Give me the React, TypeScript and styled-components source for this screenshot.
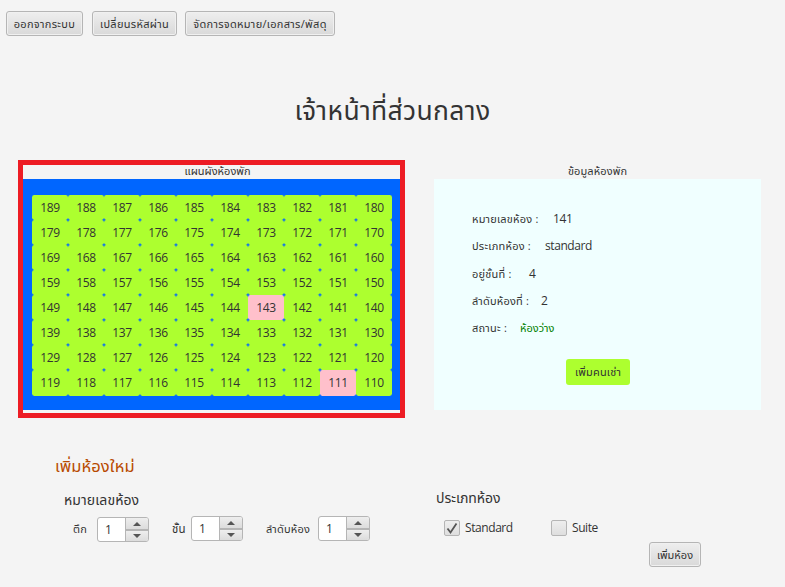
import React from "react";
import styled, { createGlobalStyle } from "styled-components";

const GlobalStyle = createGlobalStyle`
  * { box-sizing: border-box; }
  body { margin: 0; background: #f4f4f4; }
`;

const Page = styled.main`
  width: 785px;
  height: 587px;
  overflow: hidden;
  background: #f4f4f4;
  color: #333;
  font-family: "Open Sans", "Noto Sans Thai", "Liberation Sans", sans-serif;
  font-size: 12px;
  line-height: 16px;
  display: flex;
  flex-direction: column;
`;

const Text = styled.span<{ $size?: number; $track?: number; $color?: string }>`
  display: block;
  white-space: nowrap;
  font-size: ${(p) => p.$size ?? 11}px;
  letter-spacing: ${(p) => p.$track ?? 0.2}px;
  color: ${(p) => p.$color ?? "#333"};
`;

const Latin = styled.span`
  display: block;
  white-space: nowrap;
  font-size: 12px;
  letter-spacing: -0.42px;
`;

const Toolbar = styled.header`
  display: flex;
  height: 36px;
  padding: 11px 0 0 6px;
`;

const Button = styled.button<{ $w: number; $gap?: number }>`
  width: ${(p) => p.$w}px;
  height: 25px;
  margin: 0 ${(p) => p.$gap ?? 0}px 0 0;
  padding: 0;
  flex: none;
  display: flex;
  align-items: center;
  justify-content: center;
  border: 1px solid #b5b5b5;
  border-radius: 3px;
  background: linear-gradient(#eeeeee, #d9d9d9);
  box-shadow: inset 0 0 0 1px #f0f0f0;
  font-family: inherit;
  line-height: 16px;
`;

const RentButton = styled(Button)`
  height: 26px;
  border: 0;
  background: #adff2f;
  box-shadow: none;
  margin: 18px 0 0 94px;
`;

const Title = styled.h1`
  margin: 0;
  height: 124px;
  padding-top: 54px;
  display: flex;
  justify-content: center;
  font-weight: 400;
  line-height: 40px;
`;

const Panels = styled.section`
  display: flex;
  height: 258px;
  padding-left: 18px;
`;

const MapPanel = styled.div`
  width: 387px;
  height: 258px;
  border: 5px solid #ed1c24;
  flex: none;
`;

const PanelHeading = styled.div<{ $h: number; $pad: number; $shift?: number; $line?: number }>`
  height: ${(p) => p.$h}px;
  padding: ${(p) => p.$pad}px 0 0 ${(p) => p.$shift ?? 0}px;
  display: flex;
  justify-content: center;
  line-height: ${(p) => p.$line ?? 16}px;
`;

const MapArea = styled.div`
  height: 231px;
  padding: 16px 8px 0 9px;
  background: #0066ff;
`;

const RoomGrid = styled.div`
  display: grid;
  grid-template-columns: repeat(10, 36px);
  grid-template-rows: repeat(7, 25px) 26px;
`;

const Room = styled.div<{ $busy: boolean }>`
  display: flex;
  justify-content: center;
  border-radius: 2.4px;
  background: ${(p) => (p.$busy ? "#ffc0cb" : "#adff2f")};
  line-height: 25px;
`;

const InfoPanel = styled.div`
  width: 327px;
  margin-left: 29px;
`;

const InfoArea = styled.div`
  height: 231px;
  padding: 26px 0 0 38px;
  background: #f0ffff;
`;

const InfoRow = styled.div`
  display: flex;
  height: 27.3px;
  align-items: center;
  padding-top: 1px;
`;

const Label = styled.div<{ $w: number }>`
  width: ${(p) => p.$w}px;
  flex: none;
`;

const Form = styled.section`
  display: flex;
`;

const NumberColumn = styled.div`
  width: 436px;
  padding: 36px 0 0 55px;
`;

const TypeColumn = styled.div`
  width: 349px;
  padding-top: 71px;
`;

const Line = styled.div<{ $h: number; $left?: number; $top?: number }>`
  display: flex;
  height: ${(p) => p.$h}px;
  align-items: center;
  padding-left: ${(p) => p.$left ?? 0}px;
  padding-top: ${(p) => p.$top ?? 0}px;
`;

const SpinnerBox = styled.div<{ $drop?: number; $gap?: number }>`
  width: 52px;
  height: 25px;
  margin: ${(p) => p.$drop ?? 0}px ${(p) => p.$gap ?? 0}px 0 0;
  flex: none;
  display: grid;
  grid-template-columns: 27px 23px;
  border: 1px solid #b5b5b5;
  border-radius: 3px;
  background: #fff;
  overflow: hidden;
  line-height: 24px;
`;

const SpinnerValue = styled.div`
  padding-left: 7px;
`;

const Steps = styled.div`
  border-left: 1px solid #b5b5b5;
  display: grid;
  grid-template-rows: 11px 12px;
`;

const Step = styled.div`
  display: flex;
  align-items: center;
  justify-content: center;
  background: linear-gradient(#eeeeee, #dcdcdc);
  & + & { border-top: 2px solid #b5b5b5; }
`;

const CheckBox = styled.div`
  width: 16px;
  height: 16px;
  margin-right: 5px;
  border: 1px solid #b5b5b5;
  border-radius: 2px;
  background: linear-gradient(#eeeeee, #dedede);
  flex: none;
  display: flex;
`;

const Footer = styled.div`
  display: flex;
  padding-left: 213px;
`;

const ROOMS = Array.from({ length: 80 }, (_, i) => 189 - i);
const BUSY = [143, 111];

const INFO = [
  { label: "หมายเลขห้อง :", value: "141", width: 81 },
  { label: "ประเภทห้อง :", value: "standard", width: 73 },
  { label: "อยู่ชั้นที่ :", value: "4", width: 57 },
  { label: "ลำดับห้องที่ :", value: "2", width: 69 },
];

function Spinner({ drop, gap }: { drop?: number; gap?: number }) {
  return (
    <SpinnerBox $drop={drop} $gap={gap}>
      <SpinnerValue>1</SpinnerValue>
      <Steps>
        <Step>
          <svg width="8" height="4" viewBox="0 0 8 4"><path d="M0 4 4 0l4 4z" fill="#555" /></svg>
        </Step>
        <Step>
          <svg width="8" height="4" viewBox="0 0 8 4"><path d="M0 0h8L4 4z" fill="#555" /></svg>
        </Step>
      </Steps>
    </SpinnerBox>
  );
}

export default function App() {
  return (
    <Page>
      <GlobalStyle />
      <Toolbar>
        <Button $w={77} $gap={9}><Text $track={0.3}>ออกจากระบบ</Text></Button>
        <Button $w={85} $gap={8}><Text $track={0.3}>เปลี่ยนรหัสผ่าน</Text></Button>
        <Button $w={150}><Text $track={0.3}>จัดการจดหมาย/เอกสาร/พัสดุ</Text></Button>
      </Toolbar>
      <Title><Text $size={26.5} $track={0.35}>เจ้าหน้าที่ส่วนกลาง</Text></Title>
      <Panels>
        <MapPanel>
          <PanelHeading $h={14} $pad={0} $shift={12} $line={12}><Text $track={0}>แผนผังห้องพัก</Text></PanelHeading>
          <MapArea>
            <RoomGrid>
              {ROOMS.map((n) => <Room key={n} $busy={BUSY.includes(n)}><Latin>{n}</Latin></Room>)}
            </RoomGrid>
          </MapArea>
        </MapPanel>
        <InfoPanel>
          <PanelHeading $h={19} $pad={3}><Text $track={0.1}>ข้อมูลห้องพัก</Text></PanelHeading>
          <InfoArea>
            {INFO.map((r) => (
              <InfoRow key={r.label}>
                <Label $w={r.width}><Text>{r.label}</Text></Label>
                <Latin>{r.value}</Latin>
              </InfoRow>
            ))}
            <InfoRow>
              <Label $w={48}><Text>สถานะ :</Text></Label>
              <Text $track={0} $color="#008000">ห้องว่าง</Text>
            </InfoRow>
            <RentButton $w={64}><Text>เพิ่มคนเช่า</Text></RentButton>
          </InfoArea>
        </InfoPanel>
      </Panels>
      <Form>
        <NumberColumn>
          <Line $h={24}><Text $size={16.5} $track={0.1} $color="#b84a00">เพิ่มห้องใหม่</Text></Line>
          <Line $h={38} $left={9} $top={5}><Text $size={14} $track={0.1}>หมายเลขห้อง</Text></Line>
          <Line $h={25} $left={18}>
            <Label $w={24}><Text>ตึก</Text></Label>
            <Spinner drop={2} gap={23} />
            <Label $w={19}><Text $size={11.5}>ชั้น</Text></Label>
            <Spinner gap={23} />
            <Label $w={52}><Text>ลำดับห้อง</Text></Label>
            <Spinner />
          </Line>
        </NumberColumn>
        <TypeColumn>
          <Line $h={18}><Text $size={14} $track={-0.05}>ประเภทห้อง</Text></Line>
          <Line $h={35} $left={8} $top={6}>
            <CheckBox>
              <svg width="14" height="14" viewBox="0 0 14 14"><path d="M2.5 7.5 5.5 11.5 11.5 2.5" fill="none" stroke="#555" strokeWidth="1.8" /></svg>
            </CheckBox>
            <Label $w={86}><Latin>Standard</Latin></Label>
            <CheckBox />
            <Latin>Suite</Latin>
          </Line>
          <Footer><Button $w={52}><Text $track={0}>เพิ่มห้อง</Text></Button></Footer>
        </TypeColumn>
      </Form>
    </Page>
  );
}
